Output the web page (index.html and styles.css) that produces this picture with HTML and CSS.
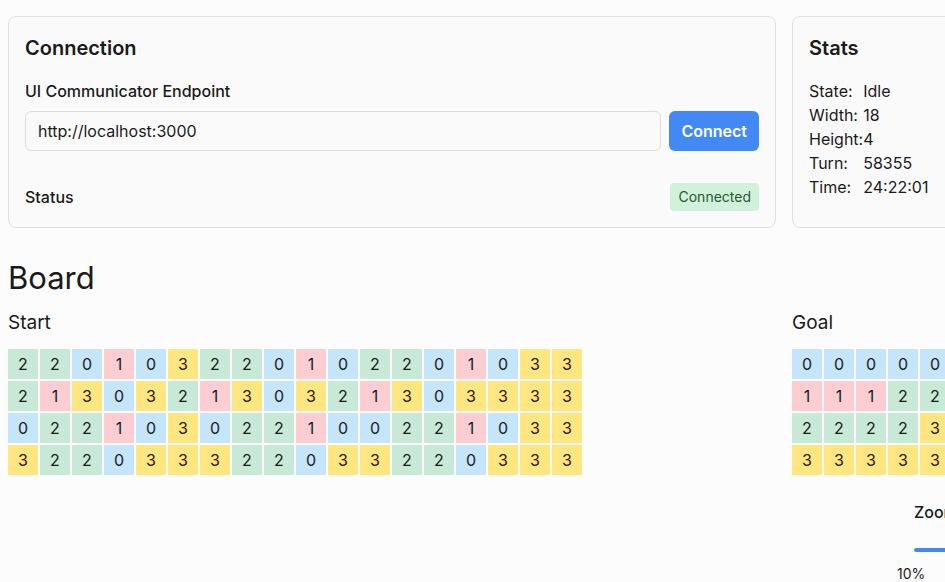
FILE: index.html
```html
<!DOCTYPE html>
<html>
<head>
<meta charset="utf-8">
<link rel="stylesheet" href="styles.css">
</head>
<body>
<main class="page">
  <section class="top">
    <div class="card">
      <h2 class="card-title">Connection</h2>
      <label class="field-label">UI Communicator Endpoint</label>
      <div class="field-row">
        <input class="endpoint" type="text" value="http://localhost:3000">
        <button class="btn">Connect</button>
      </div>
      <div class="status-row">
        <span class="status-label">Status</span>
        <span class="badge">Connected</span>
      </div>
    </div>
    <div class="card">
      <h2 class="card-title">Stats</h2>
      <table class="stats">
        <tr><td>State:</td><td>Idle</td></tr>
        <tr><td>Width:</td><td>18</td></tr>
        <tr><td>Height:</td><td>4</td></tr>
        <tr><td>Turn:</td><td>58355</td></tr>
        <tr><td>Time:</td><td>24:22:01</td></tr>
      </table>
    </div>
  </section>

  <h1 class="board-title">Board</h1>
  <section class="boards">
    <div class="board-col">
      <h3 class="board-sub">Start</h3>
      <div class="grid" id="start"></div>
    </div>
    <div class="board-col">
      <h3 class="board-sub">Goal</h3>
      <div class="grid" id="goal"></div>
      <div class="zoom">
        <div class="zoom-label">Zoom</div>
        <div class="zoom-track"></div>
        <div class="zoom-min">10%</div>
      </div>
    </div>
  </section>
</main>
<script src="app.js"></script>
</body>
</html>
```

FILE: app.js
```js
const start = [
  "220103220102201033",
  "213032130321303333",
  "022103022100221033",
  "322033322033220333"
];
const goal = [
  "000000000000000000",
  "111222222222222222",
  "222233333111111222",
  "333333333333333333"
];
function fill(id, rows) {
  const el = document.getElementById(id);
  rows.forEach(r => {
    for (const ch of r) {
      const c = document.createElement("div");
      c.className = "cell c" + ch;
      c.textContent = ch;
      el.appendChild(c);
    }
  });
}
fill("start", start);
fill("goal", goal);
```

FILE: styles.css
```css
html, body {
  margin: 0;
  padding: 0;
  overflow: hidden;
  background: #fcfcfc;
}
body {
  font-family: Inter, "Noto Sans", sans-serif;
  color: #1a1a1a;
}
.page {
  width: 1568px;
  padding: 16px 8px;
  box-sizing: border-box;
}
.top {
  display: grid;
  grid-template-columns: 768px 768px;
  column-gap: 16px;
}
.card {
  border: 1px solid #e0e0e0;
  border-radius: 8px;
  background: #fafafa;
  padding: 16px;
}
.card-title {
  margin: 0 0 16px;
  font-size: 20px;
  line-height: 30px;
  font-weight: 600;
}
.field-label {
  display: block;
  font-size: 16px;
  line-height: 24px;
  font-weight: 500;
  margin-bottom: 8px;
}
.field-row {
  display: flex;
  gap: 8px;
}
.endpoint {
  flex: 1;
  height: 40px;
  box-sizing: border-box;
  border: 1px solid #dcdcdc;
  border-radius: 6px;
  background: #fafafa;
  padding: 0 12px;
  font-family: inherit;
  font-size: 16px;
  color: #1a1a1a;
}
.btn {
  height: 40px;
  padding: 0 12px;
  border: none;
  border-radius: 6px;
  background: #4389f6;
  color: #fff;
  font-family: inherit;
  font-size: 16px;
  font-weight: 600;
}
.status-row {
  display: flex;
  justify-content: space-between;
  align-items: center;
  margin-top: 32px;
}
.status-label {
  font-size: 16px;
  font-weight: 500;
}
.badge {
  background: #d1f1db;
  color: #1f5a2e;
  font-size: 14px;
  line-height: 20px;
  padding: 4px 8px;
  border-radius: 4px;
}
.stats {
  border-collapse: collapse;
  font-size: 16px;
  line-height: 24px;
}
.stats td {
  padding: 0;
}
.board-title {
  margin: 30px 0 0;
  font-size: 31px;
  line-height: 40px;
  font-weight: 400;
}
.boards {
  display: grid;
  grid-template-columns: 768px 768px;
  column-gap: 16px;
  margin-top: 13px;
}
.board-sub {
  margin: 0 0 14px;
  font-size: 19px;
  line-height: 24px;
  font-weight: 400;
}
.grid {
  display: grid;
  grid-template-columns: repeat(18, 30px);
  grid-auto-rows: 30px;
  gap: 2px;
}
.cell {
  display: flex;
  align-items: center;
  justify-content: center;
  font-size: 16px;
  color: #1a1a1a;
}
.c0 { background: #c5e5fd; }
.c1 { background: #fecdd2; }
.c2 { background: #c7e9d5; }
.c3 { background: #ffe681; }
.zoom {
  margin-left: 105px;
  margin-top: 25px;
}
.zoom-label {
  margin-left: 17px;
  font-size: 16px;
  line-height: 24px;
  font-weight: 500;
}
.zoom-track {
  margin: 24px 0 0 17px;
  height: 4px;
  width: 300px;
  border-radius: 2px;
  background: #4389f6;
}
.zoom-min {
  margin-top: 12px;
  font-size: 14px;
  line-height: 20px;
}
```
